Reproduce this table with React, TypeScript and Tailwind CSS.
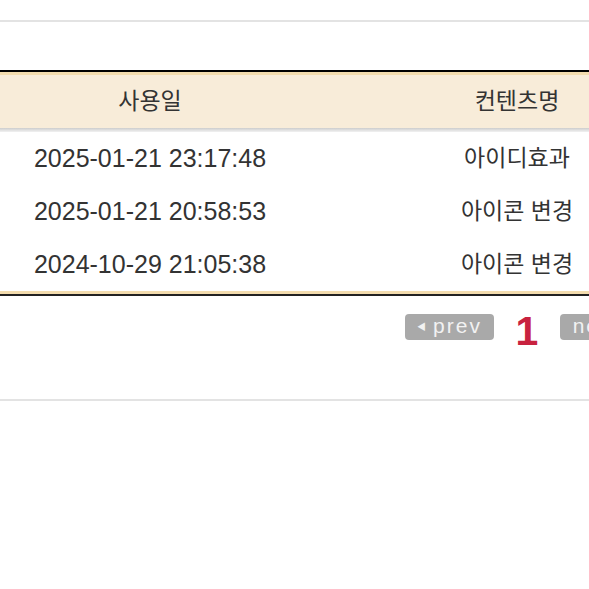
const rows = [
  { date: '2025-01-21 23:17:48', name: '아이디효과' },
  { date: '2025-01-21 20:58:53', name: '아이콘 변경' },
  { date: '2024-10-29 21:05:38', name: '아이콘 변경' },
];

export default function App() {
  return (
    <div
      className="h-screen w-full overflow-hidden bg-white text-[#333]"
      style={{ fontFamily: "'Liberation Sans', 'Noto Sans CJK KR', sans-serif" }}
    >
      <div className="h-[20px]" />
      <div className="h-[2px] bg-[#e3e3e3]" />

      <div className="w-[734px] pt-[48px]">
        {/* usage history table */}
        <div className="border-t-2 border-black">
          <div className="h-[3px] bg-[#f3dcae]" />
          <div className="flex h-[53px] items-center bg-[#f8ecd9] text-[23px]">
            <div className="w-[300px] text-center">사용일</div>
            <div className="flex-1 text-center">컨텐츠명</div>
          </div>
          <div className="h-[4px] bg-gradient-to-b from-[#cdcdcd] to-[#f2f2f2]" />
          {rows.map((row) => (
            <div key={row.date} className="flex h-[53px] items-center text-[25px]">
              <div className="w-[300px] text-center">{row.date}</div>
              <div className="flex-1 text-center text-[23px]">{row.name}</div>
            </div>
          ))}
          <div className="h-[3px] bg-[#f3dcae]" />
          <div className="h-[2px] bg-[#222]" />
        </div>

        <div className="flex items-start pl-[405px] pt-[18px]">
          <button
            type="button"
            className="flex h-[26px] w-[89px] items-center justify-center gap-[5px] rounded-[4px] bg-[#a9a9a9] text-[21px] leading-none tracking-[2px] text-[#f2f2f2]"
          >
            <span className="text-[9px]">◀</span>
            <span className="-mt-[3px]">prev</span>
          </button>
          <span className="-mt-[3px] w-[66px] text-center text-[41px] font-bold leading-none text-[#c8223f]">1</span>
          <button
            type="button"
            className="flex h-[26px] w-[89px] items-center justify-center gap-[5px] rounded-[4px] bg-[#a9a9a9] text-[21px] leading-none tracking-[2px] text-[#f2f2f2]"
          >
            <span className="-mt-[3px]">next</span>
            <span className="text-[9px]">▶</span>
          </button>
        </div>
      </div>

      <div className="mt-[47px] h-[2px] bg-[#e3e3e3]" />
    </div>
  );
}
